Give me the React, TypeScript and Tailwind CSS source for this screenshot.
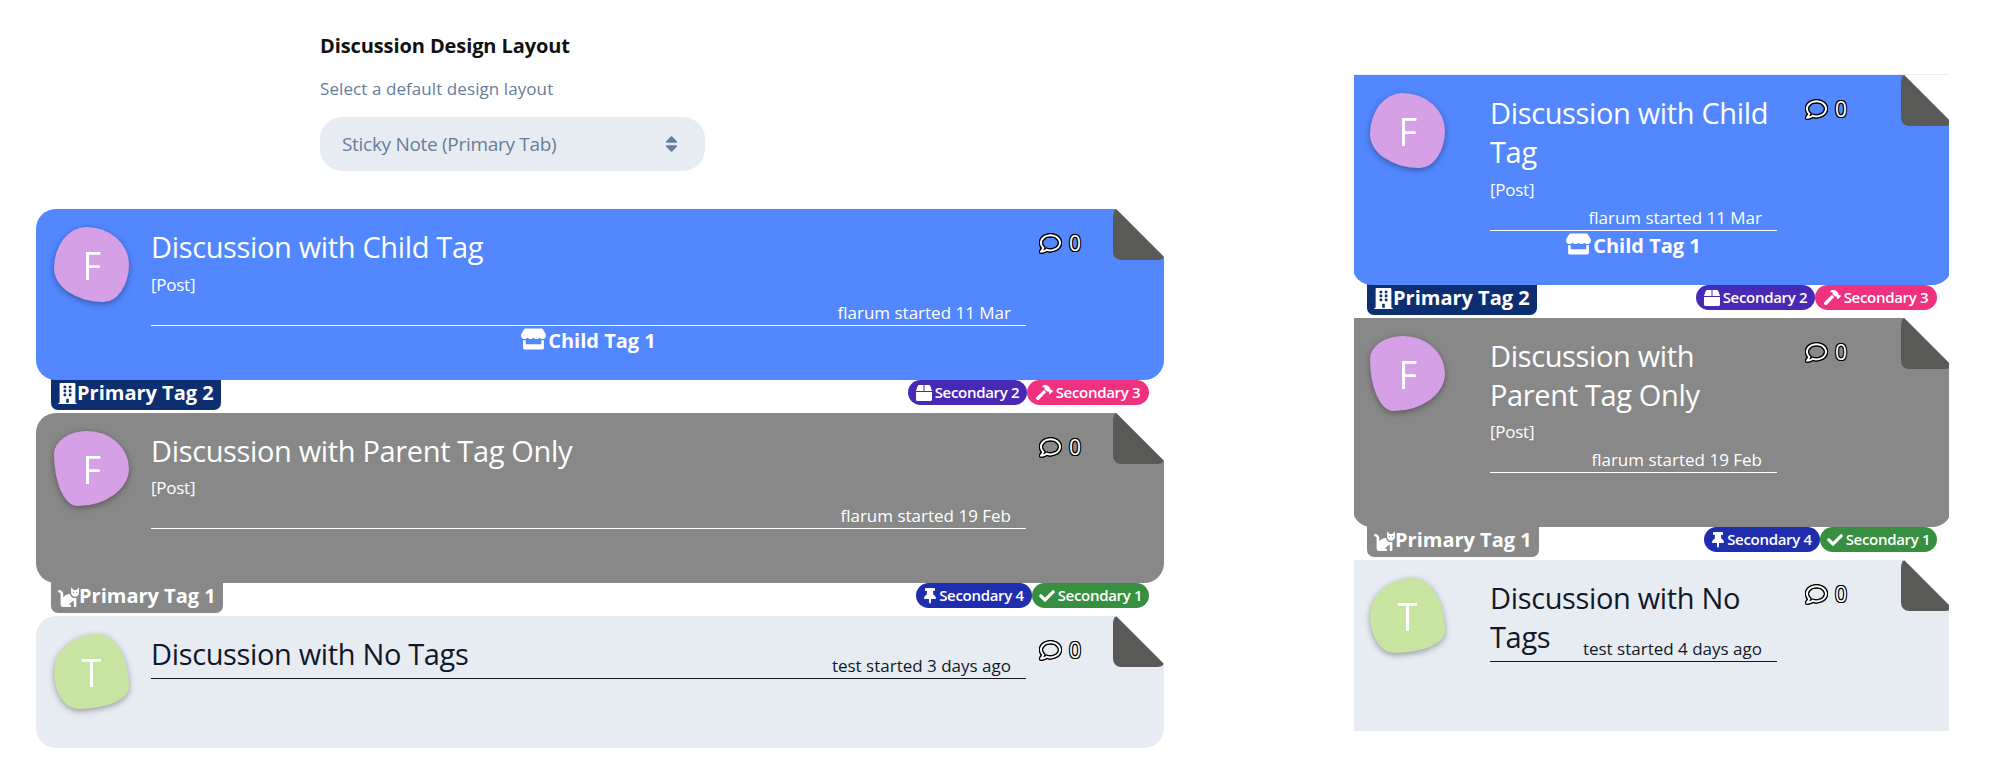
import type { ReactNode } from "react";
import {
  FaBox,
  FaBuilding,
  FaCat,
  FaCheck,
  FaHammer,
  FaRegComment,
  FaSort,
  FaStore,
  FaThumbtack,
} from "react-icons/fa";

type Item = {
  title: string;
  post?: boolean;
  meta: string;
  letter: string;
  avatar: string;
  card: string;
  line: string;
  postGap: string;
  metaGap: string;
  child?: string;
  bottom: string;
  narrowBottom: string;
  primary?: { label: string; color: string; icon: ReactNode };
  secondary?: { label: string; color: string; icon: ReactNode }[];
};

const OUTLINE =
  "[text-shadow:-1px_-1px_0_#000,1px_-1px_0_#000,-1px_1px_0_#000,1px_1px_0_#000]";
const ICON_OUTLINE =
  "[filter:drop-shadow(1px_0_0_#000)_drop-shadow(-1px_0_0_#000)_drop-shadow(0_1px_0_#000)_drop-shadow(0_-1px_0_#000)]";

const items: Item[] = [
  {
    title: "Discussion with Child Tag",
    post: true,
    meta: "flarum started 11 Mar",
    letter: "F",
    avatar: "bg-[#d5a0e5] rounded-[43%_57%_34%_66%/55%_50%_50%_45%]",
    card: "bg-[#5287ff] text-white",
    line: "border-white",
    postGap: "mt-2",
    metaGap: "mt-[6px]",
    child: "Child Tag 1",
    bottom: "pb-[27px]",
    narrowBottom: "pb-[27px]",
    primary: {
      label: "Primary Tag 2",
      color: "bg-[#0e2e72] w-[170px]",
      icon: <FaBuilding className="h-[21px] w-[19px]" />,
    },
    secondary: [
      { label: "Secondary 2", color: "bg-[#4829b6] w-[119px]", icon: <FaBox size={16} /> },
      { label: "Secondary 3", color: "bg-[#ef317f] w-[122px]", icon: <FaHammer size={17} /> },
    ],
  },
  {
    title: "Discussion with Parent Tag Only",
    post: true,
    meta: "flarum started 19 Feb",
    letter: "F",
    avatar: "bg-[#d5a0e5] rounded-[44%_56%_69%_31%/31%_50%_50%_69%]",
    card: "bg-[#888888] text-white",
    line: "border-white",
    postGap: "mt-[7px]",
    metaGap: "mt-[6px]",
    bottom: "pb-[54px]",
    narrowBottom: "pb-[54px]",
    primary: {
      label: "Primary Tag 1",
      color: "bg-[#888888] w-[172px]",
      icon: <FaCat className="h-[21px] w-[21px]" />,
    },
    secondary: [
      { label: "Secondary 4", color: "bg-[#1f2daf] w-[116px]", icon: <FaThumbtack className="h-4 w-[12px]" /> },
      { label: "Secondary 1", color: "bg-[#37903f] w-[117px]", icon: <FaCheck size={16} /> },
    ],
  },
  {
    title: "Discussion with No Tags",
    meta: "test started 3 days ago",
    letter: "T",
    avatar: "bg-[#c7e5a0] rounded-[58%_42%_68%_32%/50%_71%_29%_50%]",
    card: "bg-[#e7ecf3] text-[#111827]",
    line: "border-[#111827]",
    postGap: "",
    metaGap: "-mt-[18px]",
    bottom: "pb-[39px]",
    narrowBottom: "pb-[69px]",
  },
];

function Fold() {
  return (
    <svg className="absolute right-0 top-0 h-[51px] w-[51px]" viewBox="0 0 51 51">
      <path d="M3 0H51V48Z" fill="#fff" />
      <path d="M3.3 .3L50.8 47.8Q49 51 44 51H8A8 8 0 0 1 0 43V8Q0 2 3.3 .3Z" fill="#595957" />
    </svg>
  );
}

function Discussion({ item, narrow, meta }: { item: Item; narrow?: boolean; meta: string }) {
  const shape = narrow
    ? item.primary
      ? "rounded-b-[20px]"
      : ""
    : "rounded-[20px] rounded-tr-none";
  return (
    <article>
      <div
        className={`relative z-10 flex pl-[18px] pt-[18px] ${item.card} ${narrow ? item.narrowBottom : item.bottom} ${shape}`}
      >
        <div
          className={`flex h-[75px] w-[75px] shrink-0 items-center justify-center text-[38px] leading-none text-white shadow-[0_2px_6px_rgba(0,0,0,0.35)] ${item.avatar} ${narrow ? "mr-[45px]" : "mr-[22px]"}`}
        >
          <span className="scale-x-[0.95]">{item.letter}</span>
        </div>
        <div className="min-w-0 flex-1">
          <div className={`border-b pb-px ${item.line}`}>
            <h3 className="text-[29px] leading-[39px] tracking-[-0.35px]">{item.title}</h3>
            {item.post && (
              <p className={`text-[17px] leading-[22px] tracking-[-0.25px] ${item.postGap}`}>[Post]</p>
            )}
            <p className={`ml-auto w-fit pr-[15px] text-[17px] leading-[22px] ${item.metaGap}`}>{meta}</p>
          </div>
          {item.child && (
            <div className="mt-[3px] flex h-6 items-center justify-center gap-[2px] text-[20px] font-bold leading-6">
              <FaStore className="-mt-1 h-[22px] w-[25px]" />
              <span>{item.child}</span>
            </div>
          )}
        </div>
        <div className={`flex shrink-0 items-start text-white ${narrow ? "w-[175px] pl-[29px]" : "w-[138px] pl-[14px]"}`}>
          <FaRegComment size={21} className={`mt-[6px] ${ICON_OUTLINE}`} />
          <span className={`ml-[8px] mt-[4px] text-[21px] leading-6 ${OUTLINE}`}>0</span>
        </div>
        <Fold />
      </div>
      {item.primary && (
        <div className="flex h-[33px] items-start justify-between px-[15px] text-white">
          <div
            className={`-mt-1 flex h-[34px] items-center rounded-b-[7px] pl-[7px] text-[20px] font-bold leading-6 ${item.primary.color}`}
          >
            {item.primary.icon}
            <span className="-mt-px whitespace-nowrap">{item.primary.label}</span>
          </div>
          <div className="flex">
            {item.secondary?.map((s) => (
              <div
                key={s.label}
                className={`flex h-[25px] items-center justify-center gap-[3px] whitespace-nowrap rounded-full text-[15px] font-semibold leading-5 tracking-[-0.3px] ${s.color}`}
              >
                {s.icon}
                <span className="-mt-px">{s.label}</span>
              </div>
            ))}
          </div>
        </div>
      )}
    </article>
  );
}

export default function App() {
  return (
    <main className="flex h-[772px] w-[1992px] overflow-hidden bg-white pl-9 font-['Open_Sans','Noto_Sans',sans-serif]">
      <section className="w-[1128px]">
        <header className="ml-[284px] h-[209px] w-[385px] pt-[33px]">
          <h2 className="text-[20px] font-bold leading-[26px] tracking-[-0.1px] text-[#111111]">Discussion Design Layout</h2>
          <p className="mt-[18px] text-[17px] leading-6 tracking-[0.08px] text-[#667d99]">Select a default design layout</p>
          <div className="mt-[16px] flex h-[54px] items-center justify-between rounded-[22px] bg-[#e7ecf3] pl-[22px] pr-[27px] text-[#667d99]">
            <span className="text-[19px] tracking-[-0.3px]">Sticky Note (Primary Tab)</span>
            <FaSort className="h-5 w-[13px]" />
          </div>
        </header>
        {items.map((i) => (
          <Discussion key={i.title} item={i} meta={i.meta} />
        ))}
      </section>
      <section className="ml-[190px] mt-[74px] h-[660px] w-[595px] overflow-hidden border-t border-[#e7ecf3]">
        <div className="-ml-[2px] w-[600px]">
          {items.map((i) => (
            <Discussion key={i.title} item={i} narrow meta={i.meta.replace("3 days", "4 days")} />
          ))}
        </div>
      </section>
    </main>
  );
}
